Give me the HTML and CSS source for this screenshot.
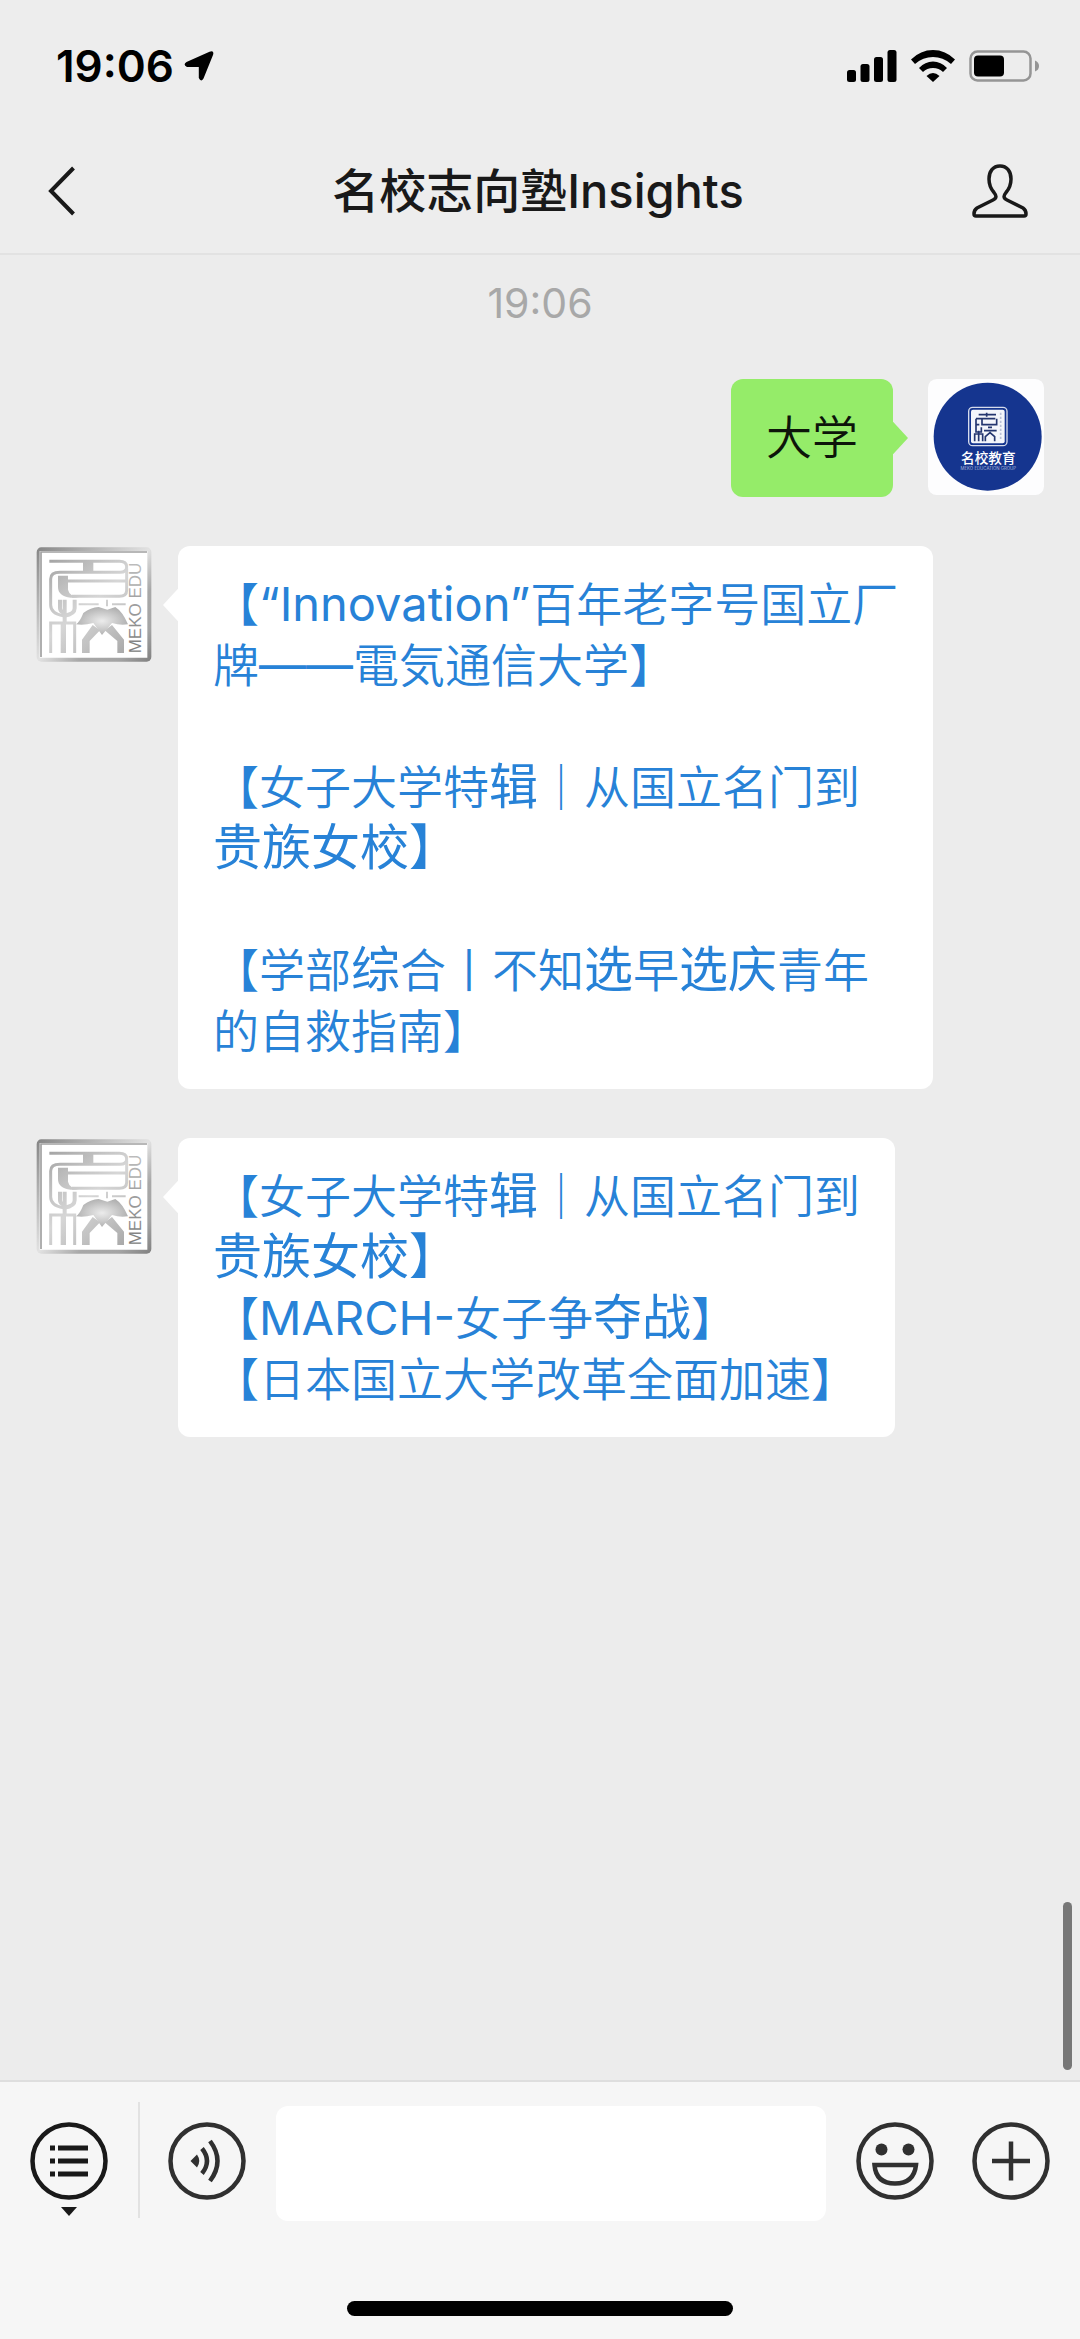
FILE: index.html
```html
<!DOCTYPE html>
<html lang="zh-CN">
<head>
<meta charset="utf-8">
<meta name="viewport" content="width=device-width, initial-scale=1">
<title>名校志向塾Insights</title>
<link rel="stylesheet" href="styles.css">
</head>
<body>
<svg class="defs" aria-hidden="true">
  <defs>
    <linearGradient id="frame" x1="0" y1="0" x2="1" y2="1">
      <stop offset="0" stop-color="#858585"/>
      <stop offset="0.15" stop-color="#a2a2a2"/>
      <stop offset="0.35" stop-color="#c8c8c8"/>
      <stop offset="0.5" stop-color="#e2e2e2"/>
      <stop offset="0.68" stop-color="#a8a8a8"/>
      <stop offset="0.85" stop-color="#a4a4a4"/>
      <stop offset="1" stop-color="#808080"/>
    </linearGradient>
    <linearGradient id="metal" gradientUnits="userSpaceOnUse" x1="50" y1="50" x2="280" y2="330">
      <stop offset="0" stop-color="#a4a4a4"/>
      <stop offset="0.3" stop-color="#c4c4c4"/>
      <stop offset="0.5" stop-color="#d6d6d6"/>
      <stop offset="0.75" stop-color="#c2c2c2"/>
      <stop offset="1" stop-color="#a8a8a8"/>
    </linearGradient>
    <linearGradient id="ink" x1="0" y1="0" x2="1" y2="0">
      <stop offset="0" stop-color="#7c7c7c"/>
      <stop offset="1" stop-color="#bdbdbd"/>
    </linearGradient>
    <radialGradient id="petal">
      <stop offset="0" stop-color="#ececec"/>
      <stop offset="1" stop-color="#b2b2b2"/>
    </radialGradient>
    <symbol id="seal" viewBox="12 9 348 348">
      <rect x="14" y="13" width="344" height="343" rx="14" fill="url(#frame)"/>
      <path d="M23 24H346V344H23z" fill="#fff"/>
      <path d="M27 342V27H345" fill="none" stroke="#a0a0a0" stroke-width="5"/>
      <g fill="none" stroke="url(#metal)" stroke-width="9">
        <path d="M52 55H262Q284 55 284 72Q284 88 264 88H84Q56 88 56 108V186Q56 212 94 218"/>
        <path d="M108 114H284M284 76V142Q284 160 262 160H120"/>
        <path d="M84 170V196Q84 206 97 210M128 170V196Q128 214 97 218" stroke-width="12"/>
        <path d="M56 330V240H128V330"/>
        <path d="M140 184H200M240 184H281" stroke-width="6"/>
      </g>
      <g fill="url(#metal)">
        <path d="M153 56H184V88H153z"/>
        <path d="M78 98H108V140Q112 158 140 164H116Q78 160 78 132z"/>
        <path d="M92 170H104V240H102V330H86V240H92z"/>
        <path d="M150 330V290L182 246L204 262L173 294V330z"/>
        <path d="M276 330V290L240 246L218 262L256 294V330z"/>
        <path d="M222 170H228V190H222z"/>
      </g>
      <path d="M132 244Q144 236 154 210Q176 194 200 192L226 200L250 192Q272 206 288 244Q264 248 240 240L210 276L184 240Q156 248 132 244z" fill="url(#petal)"/>
      <text class="seal-text" transform="translate(327 331) rotate(-90)">MEKO EDU</text>
    </symbol>
  </defs>
</svg>
<div class="app">
  <header class="top">
    <div class="status">
      <span class="clock">19:06
        <svg width="30" height="30" viewBox="0 0 30 30"><path d="M25.500 .8Q30.500 -1 29 4L19.500 27.500Q17 31.500 14.800 27V16H3Q-1.500 14 2.500 11z"/></svg>
      </span>
      <span class="indicators">
        <svg width="50" height="32" viewBox="0 0 50 32"><rect y="20" width="9" height="12" rx="2.500"/><rect x="13.500" y="14" width="9" height="18" rx="2.500"/><rect x="27" y="7" width="9" height="25" rx="2.500"/><rect x="40.500" width="9" height="32" rx="2.500"/></svg>
        <svg width="44" height="32" viewBox="0 0 44 32"><path d="M0 9.500Q9.500 0 22 0T44 9.500L40 14Q32 7 22 7T4 14z"/><path d="M8 18Q14 11.500 22 11.500T36 18L32 22Q28 18 22 18T12 22z"/><path d="M15.500 26Q22 20 28.500 26L22 32z"/></svg>
        <svg width="70" height="32" viewBox="0 0 70 32"><rect x="1.500" y="1.500" width="60" height="29" rx="7" fill="none" stroke="#959595" stroke-width="2.500"/><rect x="5" y="5.500" width="30" height="21" rx="4"/><path d="M66 10.500Q70 12 70 16T66 21.500z" fill="#959595"/></svg>
      </span>
    </div>
    <div class="nav">
      <button class="icon-btn" aria-label="返回"><svg width="28" height="50" viewBox="0 0 28 50"><path d="M25.500 2L3 25L25.500 48" fill="none" stroke="#191919" stroke-width="4"/></svg></button>
      <h1 class="title">名校志向塾Insights</h1>
      <button class="icon-btn" aria-label="资料"><svg width="56" height="54" viewBox="0 0 56 54"><path d="M28 2C21 2 17 7.500 17 15C17 21 18.500 24.500 22 28.500C24.500 31.500 25 34 21 36L5 44Q2 46 2 50Q2 52 4 52H52Q54 52 54 50Q54 46 51 44L35 36C31 34 31.500 31.500 34 28.500C37.500 24.500 39 21 39 15C39 7.500 35 2 28 2Z" fill="none" stroke="#191919" stroke-width="3.500"/></svg></button>
    </div>
  </header>

  <main class="chat">
    <time class="stamp">19:06</time>
    <article class="msg msg-out">
      <p class="bubble bubble-out">大学</p>
      <svg class="avatar" viewBox="6 5 348 348" role="img" aria-label="名校教育">
        <rect x="6" y="5" width="348" height="348" rx="26" fill="#fdfdfe"/>
        <circle cx="185" cy="178" r="162" fill="#15358f"/>
        <rect x="128" y="90" width="115" height="115" rx="12" fill="none" stroke="#d5dbec" stroke-width="4"/>
        <rect x="135" y="97" width="101" height="101" rx="6" fill="#f4f6fb"/>
        <g fill="none" stroke="#24366f" stroke-width="5">
          <path d="M182 106V118M158 112H210M150 124V142H160M150 124H208M168 124V142H212V124M150 142V164H166V150M146 192V170H170V192M158 160V192M178 192V178L192 166L206 178V192M174 160H212M186 150H198"/>
          <path d="M224 106V190" stroke="#b9c0d6" stroke-dasharray="7 5"/>
        </g>
        <text class="logo-name" x="187" y="256">名校教育</text>
        <text class="logo-sub" x="187" y="277">MEKO EDUCATION GROUP</text>
      </svg>
    </article>
    <article class="msg">
      <svg class="avatar" role="img" aria-label="MEKO EDU"><use href="#seal"/></svg>
      <div class="bubble bubble-in spaced">
        <a href="#">【<span class="latin">“Innovation”</span>百年老字号国立厂<br>牌<span class="latin">——</span>電気通信大学】</a>
        <a href="#">【女子大学特<span class="alt">辑</span>｜从国立名门到<br><span class="alt">贵族女校】</span></a>
        <a href="#">【学部<span class="alt">综</span>合丨不知<span class="alt">选</span>早<span class="alt">选庆</span>青年<br>的自救指南】</a>
      </div>
    </article>
    <article class="msg">
      <svg class="avatar" role="img" aria-label="MEKO EDU"><use href="#seal"/></svg>
      <div class="bubble bubble-in">
        <a href="#">【女子大学特<span class="alt">辑</span>｜从国立名门到<br><span class="alt">贵族女校】</span></a>
        <a href="#">【<span class="latin">MARCH-</span>女子争<span class="alt">夺战</span>】</a>
        <a href="#">【日本国立大学改革全面加速】</a>
      </div>
    </article>
    <div class="scroll-thumb"></div>
  </main>

  <footer class="bottom">
    <div class="composer">
      <button class="icon-btn menu-btn" aria-label="菜单"><svg width="78" height="96" viewBox="0 0 78 96"><circle cx="39" cy="39" r="36.500" fill="none" stroke="#191919" stroke-width="4.500"/><path d="M20 26h5M20 39h5M20 52h5M28 26h30M28 39h30M28 52h30" stroke="#191919" stroke-width="5"/><path d="M31 85h16l-8 9z" fill="#191919"/></svg></button>
      <button class="icon-btn voice-btn" aria-label="语音"><svg width="78" height="78" viewBox="0 0 78 78"><g fill="none" stroke="#303030" stroke-width="4.500"><circle cx="39" cy="39" r="36.500"/><path d="M34 26.500Q44 39 34 51.500M42 19Q57 39 42 59"/></g><path d="M22.500 39L29 32.500Q33.500 39 29 45.500z" fill="#303030"/></svg></button>
      <input class="field" type="text" aria-label="消息">
      <button class="icon-btn" aria-label="表情"><svg width="78" height="78" viewBox="0 0 78 78"><g fill="none" stroke="#303030" stroke-width="4.500"><circle cx="39" cy="39" r="36.500"/><path d="M18.500 43H60Q58 61.500 39 61.500T18.500 43z"/></g><g fill="#303030"><circle cx="25.500" cy="27.500" r="6"/><circle cx="52.500" cy="27.500" r="6"/></g></svg></button>
      <button class="icon-btn" aria-label="更多"><svg width="78" height="78" viewBox="0 0 78 78"><g fill="none" stroke="#303030" stroke-width="4.500"><circle cx="39" cy="39" r="36.500"/><path d="M39 19.500V58.500M20 39H58"/></g></svg></button>
    </div>
    <div class="home-bar"></div>
  </footer>
</div>
</body>
</html>
```
FILE: styles.css
```css
* { box-sizing: border-box; }

body {
  margin: 0;
  background: #ececec;
  font-family: Inter, "Noto Sans CJK SC", sans-serif;
}

svg { display: block; }
.defs { position: absolute; width: 0; height: 0; }

.app {
  min-height: 100vh;
  display: flex;
  flex-direction: column;
}

.icon-btn {
  flex: none;
  padding: 0;
  border: 0;
  background: none;
}

/* Header */
.top {
  background: #ededed;
  border-bottom: 2px solid #e2e2e2;
}

.status {
  display: flex;
  justify-content: space-between;
  align-items: center;
  height: 92px;
  padding: 40px 41px 0 56px;
}

.clock {
  display: flex;
  align-items: center;
  gap: 10px;
  font-size: 44px;
  font-weight: 600;
}

.indicators {
  display: flex;
  gap: 14px;
}

.nav {
  display: grid;
  grid-template-columns: 1fr auto 1fr;
  align-items: center;
  justify-items: start;
  height: 161px;
  padding: 36px 52px 0 48px;
}

.nav .icon-btn:last-child { justify-self: end; }

.title {
  margin: 0;
  color: #191919;
  font-size: 47px;
  font-weight: 500;
  line-height: 60px;
}

/* Conversation */
.chat {
  flex: 1;
  position: relative;
  display: flex;
  flex-direction: column;
  gap: 49px;
  padding: 24px 36px;
}

.stamp {
  align-self: center;
  margin-bottom: 3px;
  color: #a8a8a8;
  font-size: 41px;
  line-height: 48px;
}

.msg {
  display: flex;
  align-items: flex-start;
  gap: 26px;
}

.msg-out { justify-content: flex-end; gap: 35px; }

.avatar {
  flex: none;
  width: 116px;
  height: 116px;
}

.bubble {
  position: relative;
  margin: 0;
  min-height: 118px;
  max-width: 75%;
  padding: 28px 35px 27px;
  border-radius: 12px;
  font-family: Inter, "Noto Sans CJK JP", "Noto Sans CJK SC", sans-serif;
  font-size: 46px;
  font-weight: 350;
  line-height: 61px;
  white-space: nowrap;
}

.bubble::before {
  content: "";
  position: absolute;
  top: 43px;
  width: 22px;
  height: 32px;
  background: inherit;
}

.bubble-out { background: #95ec69; color: #0d150a; }
.bubble-out::before { left: calc(100% - 7px); clip-path: polygon(0 0, 33% 0, 100% 50%, 33% 100%, 0 100%); }

.bubble-in { background: #fff; }
.bubble-in::before { right: calc(100% - 7px); clip-path: polygon(100% 0, 67% 0, 0 50%, 67% 100%, 100% 100%); }

.bubble a {
  display: block;
  color: #2782d7;
  text-decoration: none;
}

.spaced a + a { margin-top: 61px; }

.alt {
  font-family: "Noto Sans CJK SC", sans-serif;
  font-size: 49px;
  font-weight: 400;
  line-height: 1;
}

.latin {
  font-size: 47px;
  font-weight: 400;
  line-height: 1;
}

.scroll-thumb {
  position: absolute;
  right: 8px;
  bottom: 10px;
  width: 9px;
  height: 168px;
  border-radius: 5px;
  background: #777;
}

/* Message bar */
.bottom {
  background: #f6f6f6;
  border-top: 2px solid #dedede;
  padding: 20px 30px 23px;
}

.composer {
  display: flex;
  align-items: flex-start;
  gap: 38px;
}

.composer .icon-btn { padding-top: 20px; }

.composer .menu-btn {
  padding-right: 30px;
  border-right: 2px solid #e2e2e2;
}

.voice-btn { margin: 0 -8px 0 -10px; }

.field {
  flex: 1;
  min-width: 0;
  height: 115px;
  padding: 0 24px;
  margin: 4px -8px 0 0;
  border: 0;
  border-radius: 12px;
  background: #fff;
  font: inherit;
  font-size: 46px;
}

.home-bar {
  width: 386px;
  height: 15px;
  margin: 80px auto 0;
  border-radius: 8px;
  background: #000;
}

/* Avatar lettering */
.seal-text {
  fill: url(#ink);
  font-family: "Liberation Sans", sans-serif;
  font-size: 51px;
}

.logo-name {
  fill: #fff;
  font-size: 41px;
  font-weight: 500;
  text-anchor: middle;
}

.logo-sub {
  fill: #a9b5d8;
  font-size: 13px;
  text-anchor: middle;
}
```
